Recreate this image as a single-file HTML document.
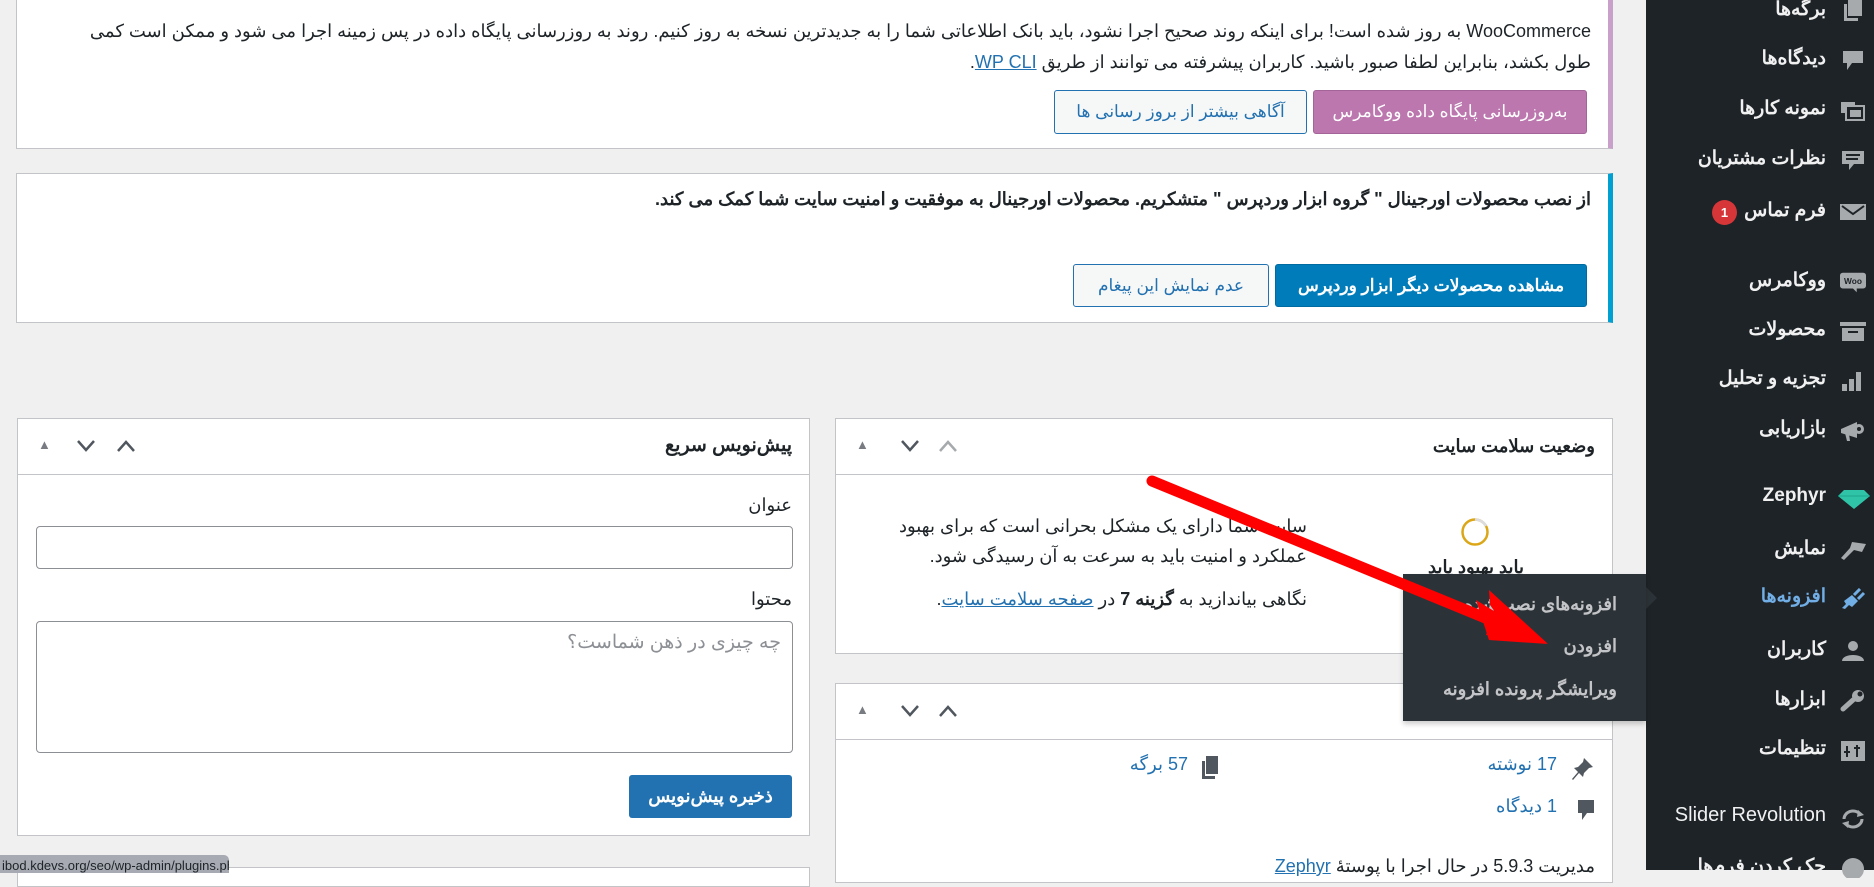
<!DOCTYPE html>
<html lang="fa" dir="rtl"><head><meta charset="utf-8">
<style>
*{box-sizing:border-box;margin:0;padding:0}
body{width:1874px;height:870px;overflow:hidden;background:#f0f0f1;font-family:"Liberation Sans","Noto Sans CJK SC",sans-serif;color:#1d2327;position:relative;font-size:17px}
.a{position:absolute}
.box{position:absolute;background:#fff;border:1px solid #c3c4c7}
.btn{position:absolute;border-radius:3px;font-size:17px;display:flex;align-items:center;justify-content:center;white-space:nowrap}
.t{position:absolute;white-space:nowrap;direction:rtl}
.side{position:absolute;left:1646px;top:0;width:228px;height:870px;background:#1d2327}
.mi{position:absolute;right:48px;color:#f0f0f1;font-size:19px;font-weight:bold;white-space:nowrap;direction:rtl}
.ic{position:absolute;left:194px;width:26px;height:22px}
.hd{position:absolute;left:0;right:0;top:0;height:56px;border-bottom:1px solid #c3c4c7}
.ctl{position:absolute;top:14px;font-size:16px;color:#787c82}
a{color:#2271b1}
</style></head><body>

<!-- notice 1 -->
<div class="box" style="left:16px;top:-2px;width:1597px;height:151px;border-right:5px solid #c9a0c9"></div>
<div class="t" style="right:283px;top:16px;font-size:18px;line-height:31px;width:1540px;text-align:right;white-space:normal">WooCommerce به روز شده است! برای اینکه روند صحیح اجرا نشود، باید بانک اطلاعاتی شما را به جدیدترین نسخه به روز کنیم. روند به روزرسانی پایگاه داده در پس زمینه اجرا می شود و ممکن است کمی طول بکشد، بنابراین لطفا صبور باشید. کاربران پیشرفته می توانند از طریق <a href="#x">WP CLI</a>.</div>
<div class="btn" style="left:1313px;top:90px;width:274px;height:44px;background:#bb77ae;border:1px solid #a36597;color:#fff">به‌روزرسانی پایگاه داده ووکامرس</div>
<div class="btn" style="left:1054px;top:90px;width:253px;height:44px;background:#f6f7f7;border:1px solid #2271b1;color:#2271b1">آگاهی بیشتر از بروز رسانی ها</div>

<!-- notice 2 -->
<div class="box" style="left:16px;top:173px;width:1597px;height:150px;border-right:5px solid #00a0d2"></div>
<div class="t" style="right:283px;top:189px;font-size:18px;font-weight:bold">از نصب محصولات اورجینال " گروه ابزار وردپرس " متشکریم. محصولات اورجینال به موفقیت و امنیت سایت شما کمک می کند.</div>
<div class="btn" style="left:1275px;top:264px;width:312px;height:43px;background:#007cba;border:1px solid #006ba1;color:#fff;font-weight:bold">مشاهده محصولات دیگر ابزار وردپرس</div>
<div class="btn" style="left:1073px;top:264px;width:196px;height:43px;background:#f6f7f7;border:1px solid #2271b1;color:#2271b1">عدم نمایش این پیغام</div>

<!-- quick draft -->
<div class="box" style="left:17px;top:418px;width:793px;height:418px">
 <div class="hd"><div class="t" style="right:17px;top:15px;font-size:19px;font-weight:bold">پیش‌نویس سریع</div>
 <div class="ctl" style="left:20px;font-size:13px;top:18px">▲</div>
 <svg class="a" style="left:58px;top:20px" width="20" height="14"><path d="M2 2 L10 11 L18 2" fill="none" stroke="#50575e" stroke-width="2.5"/></svg>
 <svg class="a" style="left:98px;top:20px" width="20" height="14"><path d="M2 12 L10 3 L18 12" fill="none" stroke="#50575e" stroke-width="2.5"/></svg>
 </div>
 <div class="t" style="right:17px;top:76px;font-size:18px">عنوان</div>
 <div class="a" style="left:18px;top:107px;width:757px;height:43px;border:1px solid #8c8f94;border-radius:4px"></div>
 <div class="t" style="right:17px;top:170px;font-size:18px">محتوا</div>
 <div class="a" style="left:18px;top:202px;width:757px;height:132px;border:1px solid #8c8f94;border-radius:4px"></div>
 <div class="t" style="right:28px;top:212px;font-size:19px;color:#8c8f94">چه چیزی در ذهن شماست؟</div>
 <div class="btn" style="left:611px;top:356px;width:163px;height:43px;background:#2271b1;color:#fff;font-weight:bold;font-size:18px">ذخیره پیش‌نویس</div>
</div>
<div class="box" style="left:17px;top:867px;width:793px;height:20px"></div>
<div class="a" style="left:0;top:855px;width:229px;height:18px;background:#a7aab3;border-radius:0 5px 0 0;font-size:13px;color:#1d2327;direction:ltr;padding-left:2px;line-height:22px;overflow:hidden;white-space:nowrap">ibod.kdevs.org/seo/wp-admin/plugins.php</div>

<!-- site health -->
<div class="box" style="left:835px;top:418px;width:778px;height:236px">
 <div class="hd"><div class="t" style="right:17px;top:17px;font-size:18px;font-weight:bold">وضعیت سلامت سایت</div>
 <div class="ctl" style="left:20px;font-size:13px;top:18px">▲</div>
 <svg class="a" style="left:64px;top:20px" width="20" height="14"><path d="M2 2 L10 11 L18 2" fill="none" stroke="#50575e" stroke-width="2.5"/></svg>
 <svg class="a" style="left:102px;top:20px" width="20" height="14"><path d="M2 12 L10 3 L18 12" fill="none" stroke="#a7aaad" stroke-width="2.5"/></svg>
 </div>
 <svg class="a" style="left:624px;top:98px" width="30" height="30"><circle cx="15" cy="15" r="12.5" fill="none" stroke="#dba617" stroke-width="2.5"/><path d="M15 2.5 A12.5 12.5 0 0 1 26 9" fill="none" stroke="#dcdcde" stroke-width="2.5"/></svg>
 <div class="t" style="left:580px;top:138px;font-size:18px;font-weight:bold;width:120px;text-align:center">باید بهبود یابد</div>
 <div class="t" style="right:305px;top:92px;font-size:18px;line-height:30px;text-align:right">سایت شما دارای یک مشکل بحرانی است که برای بهبود<br>عملکرد و امنیت باید به سرعت به آن رسیدگی شود.</div>
 <div class="t" style="right:305px;top:170px;font-size:18px">نگاهی بیاندازید به <b>گزینه 7</b> در <a href="#x">صفحه سلامت سایت</a>.</div>
</div>

<!-- at a glance -->
<div class="box" style="left:835px;top:683px;width:778px;height:200px">
 <div class="hd"><div class="ctl" style="left:20px;font-size:13px;top:18px">▲</div>
 <svg class="a" style="left:64px;top:20px" width="20" height="14"><path d="M2 2 L10 11 L18 2" fill="none" stroke="#50575e" stroke-width="2.5"/></svg>
 <svg class="a" style="left:102px;top:20px" width="20" height="14"><path d="M2 12 L10 3 L18 12" fill="none" stroke="#50575e" stroke-width="2.5"/></svg>
 </div>
 <svg class="a" style="left:735px;top:72px" width="24" height="26"><path d="M13 2 L22 11 L18 12 L13 17 L12 21 L8 17 L2 24 L1 23 L7 16 L3 12 L7 11 L12 6 Z" fill="#50575e"/></svg>
 <div class="t" style="right:55px;top:70px;font-size:18px;color:#2271b1">17 نوشته</div>
 <svg class="a" style="left:366px;top:72px" width="16" height="24"><rect x="4" y="0" width="12" height="18" fill="#50575e"/><rect x="0" y="5" width="3" height="18" fill="#50575e"/><rect x="0" y="20" width="13" height="3" fill="#50575e"/></svg>
 <div class="t" style="right:424px;top:70px;font-size:18px;color:#2271b1">57 برگه</div>
 <svg class="a" style="left:740px;top:115px" width="20" height="24"><path d="M2 1 H18 V14 H11 L6 21 V14 H2 Z" fill="#50575e"/></svg>
 <div class="t" style="right:55px;top:112px;font-size:18px;color:#2271b1">1 دیدگاه</div>
 <div class="t" style="right:17px;top:172px;font-size:18px">مدیریت 5.9.3 در حال اجرا با پوستهٔ <a href="#x">Zephyr</a></div>
</div>

<!-- sidebar -->
<div class="side">
 <div class="mi" style="top:-2px">برگه‌ها</div>
 <svg class="ic" style="top:0px" viewBox="0 0 26 22"><rect x="8" y="0" width="14" height="16" fill="#a7aaad"/><rect x="4" y="4" width="3" height="16" fill="#a7aaad"/><rect x="4" y="18" width="14" height="3" fill="#a7aaad"/></svg>
 <div class="mi" style="top:47px">دیدگاه‌ها</div>
 <svg class="ic" style="top:50px" viewBox="0 0 26 22"><path d="M3 1 H23 V13 H12 L7 20 V13 H3 Z" fill="#a7aaad"/></svg>
 <div class="mi" style="top:97px">نمونه کارها</div>
 <svg class="ic" style="top:99px" viewBox="0 0 26 22"><rect x="1" y="3" width="14" height="11" fill="#a7aaad"/><rect x="6" y="7" width="18" height="14" fill="#1d2327" stroke="#a7aaad" stroke-width="2"/><rect x="10" y="11" width="11" height="7" fill="#a7aaad"/></svg>
 <div class="mi" style="top:147px">نظرات مشتریان</div>
 <svg class="ic" style="top:150px" viewBox="0 0 26 22"><path d="M2 1 H24 V14 H14 L9 20 V14 H2 Z" fill="#a7aaad"/><path d="M6 5 H20 M6 9 H18" stroke="#1d2327" stroke-width="2"/></svg>
 <div class="mi" style="top:199px">فرم تماس</div>
 <div class="a" style="left:66px;top:200px;width:25px;height:25px;border-radius:50%;background:#d63638;color:#fff;font-size:13px;text-align:center;line-height:25px;font-weight:bold">1</div>
 <svg class="ic" style="top:202px" viewBox="0 0 26 22"><rect x="0" y="2" width="26" height="16" fill="#a7aaad"/><path d="M2 4 L13 12 L24 4" fill="none" stroke="#1d2327" stroke-width="2"/></svg>
 <div class="mi" style="top:269px">ووکامرس</div>
 <svg class="ic" style="top:271px" viewBox="0 0 28 22"><rect x="0" y="1" width="28" height="17" rx="3" fill="#a7aaad"/><path d="M14 18 L18 22 L18 18" fill="#a7aaad"/><text x="14" y="13" font-size="9" font-weight="bold" text-anchor="middle" fill="#1d2327" font-family="Liberation Sans">Woo</text></svg>
 <div class="mi" style="top:318px">محصولات</div>
 <svg class="ic" style="top:321px" viewBox="0 0 26 22"><rect x="0" y="1" width="26" height="4" fill="#a7aaad"/><rect x="2" y="7" width="22" height="13" fill="#a7aaad"/><rect x="8" y="10" width="10" height="2" fill="#1d2327"/></svg>
 <div class="mi" style="top:367px">تجزیه و تحلیل</div>
 <svg class="ic" style="top:370px" viewBox="0 0 26 22"><rect x="2" y="14" width="5" height="7" fill="#a7aaad"/><rect x="9" y="9" width="5" height="12" fill="#a7aaad"/><rect x="16" y="2" width="5" height="19" fill="#a7aaad"/></svg>
 <div class="mi" style="top:417px">بازاریابی</div>
 <svg class="ic" style="top:420px" viewBox="0 0 26 22"><path d="M1 9 L17 2 L17 18 L1 13 Z" fill="#a7aaad"/><circle cx="19" cy="9" r="5" fill="#a7aaad"/><circle cx="19" cy="9" r="2" fill="#1d2327"/><path d="M5 13 L7 21 L10 21 L9 14 Z" fill="#a7aaad"/></svg>
 <div class="mi" style="top:485px;font-size:19px">Zephyr</div>
 <svg class="ic" style="top:488px;left:192px;width:32px" viewBox="0 0 32 22"><path d="M6 2 H26 L32 8 L16 21 L0 8 Z" fill="#2fc4a8"/><path d="M0 8 H32" stroke="#1da58d" stroke-width="1"/></svg>
 <div class="mi" style="top:537px">نمایش</div>
 <svg class="ic" style="top:540px" viewBox="0 0 26 22"><path d="M12 2 L26 4 L22 12 L14 10 L4 20 L1 18 L10 8 Z" fill="#a7aaad"/></svg>
 <div class="mi" style="top:585px;color:#72aee6">افزونه‌ها</div>
 <svg class="ic" style="top:588px" viewBox="0 0 26 22"><path d="M2 20 L6 16 L4 13 L12 7 L18 13 L12 19 L9 17 L5 21 Z" fill="#72aee6"/><path d="M14 7 L20 1 M18 11 L24 5" stroke="#72aee6" stroke-width="3"/></svg>
 <div class="a" style="left:-1px;top:586px;width:0;height:0;border-top:12px solid transparent;border-bottom:12px solid transparent;border-left:12px solid #2c3338"></div>
 <div class="mi" style="top:638px">کاربران</div>
 <svg class="ic" style="top:640px" viewBox="0 0 26 22"><circle cx="13" cy="6" r="5" fill="#a7aaad"/><path d="M2 21 C2 13 24 13 24 21 Z" fill="#a7aaad"/></svg>
 <div class="mi" style="top:688px">ابزارها</div>
 <svg class="ic" style="top:690px" viewBox="0 0 26 22"><path d="M3 19 L13 10" stroke="#a7aaad" stroke-width="5" stroke-linecap="round"/><circle cx="18" cy="6" r="6" fill="#a7aaad"/><circle cx="20" cy="4" r="2.5" fill="#1d2327"/></svg>
 <div class="mi" style="top:737px">تنظیمات</div>
 <svg class="ic" style="top:740px" viewBox="0 0 26 22"><rect x="1" y="1" width="24" height="20" fill="#a7aaad"/><path d="M7 6 V17 M4 12 H10 M17 5 V17 M14 8 H20" stroke="#1d2327" stroke-width="2"/></svg>
 <div class="mi" style="top:804px;font-size:20px;font-weight:normal">Slider Revolution</div>
 <svg class="ic" style="top:808px" viewBox="0 0 26 22"><path d="M4 11 A9 8 0 0 1 20 6 M22 11 A9 8 0 0 1 6 16" fill="none" stroke="#a7aaad" stroke-width="3"/><path d="M18 2 L24 7 L17 9 Z M8 20 L2 15 L9 13 Z" fill="#a7aaad"/></svg>
 <div class="mi" style="top:855px">چک کردن فرم‌ها</div>
 <svg class="ic" style="top:856px" viewBox="0 0 26 22"><circle cx="13" cy="13" r="11" fill="#a7aaad"/></svg>
</div>

<!-- flyout -->
<div class="a" style="left:1403px;top:574px;width:243px;height:147px;background:#2c3338;box-shadow:0 3px 5px rgba(0,0,0,.2)">
 <div class="t" style="right:29px;top:20px;font-size:18px;color:#c3c4c7;font-weight:bold">افزونه‌های نصب‌شده</div>
 <div class="t" style="right:29px;top:62px;font-size:18px;color:#c3c4c7;font-weight:bold">افزودن</div>
 <div class="t" style="right:29px;top:105px;font-size:18px;color:#c3c4c7;font-weight:bold">ویرایشگر پرونده افزونه</div>
</div>

<!-- red arrow -->
<svg class="a" style="left:0;top:0" width="1874" height="870"><line x1="1152" y1="481" x2="1500" y2="624" stroke="#f00" stroke-width="11" stroke-linecap="round"/><path d="M1547 643 L1489 590 L1490 605 L1495 612 L1486 635 Z" fill="#f00"/><path d="M1548 644 L1476 600 L1489 640 Z" fill="#f00"/></svg>
</body></html>
